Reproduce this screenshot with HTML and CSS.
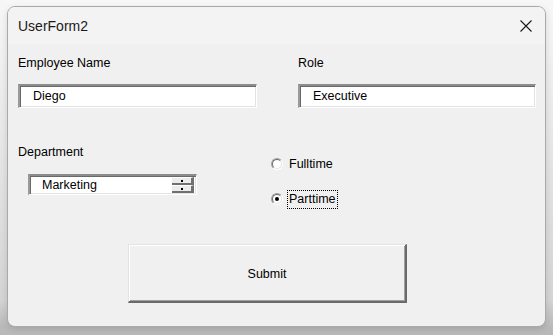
FILE: index.html
```html
<!DOCTYPE html>
<html>
<head>
<meta charset="utf-8">
<link rel="stylesheet" href="styles.css">
</head>
<body>
<div class="window">
  <div class="titlebar">
    <span class="title">UserForm2</span>
    <svg class="close" width="12" height="12" viewBox="0 0 12 12"><path d="M0.5 0.5 L11.5 11.5 M11.5 0.5 L0.5 11.5" stroke="#1a1a1a" stroke-width="1.1" fill="none"/></svg>
  </div>
  <div class="content">
    <div class="row-top">
      <div class="field">
        <div class="label">Employee Name</div>
        <div class="textbox name">Diego</div>
      </div>
      <div class="field">
        <div class="label">Role</div>
        <div class="textbox role">Executive</div>
      </div>
    </div>
    <div class="row-mid">
      <div class="field">
        <div class="label">Department</div>
        <div class="combo">
          <span class="combo-text">Marketing</span>
          <span class="spin">
            <span class="spin-btn"><i></i></span>
            <span class="spin-btn"><i></i></span>
          </span>
        </div>
      </div>
      <div class="radios">
        <div class="radio-row"><span class="radio"><span class="radio-in"></span></span><span class="radio-label">Fulltime</span></div>
        <div class="radio-row"><span class="radio"><span class="radio-in"><span class="dot"></span></span></span><span class="radio-label focus">Parttime</span></div>
      </div>
    </div>
    <div class="btn">Submit</div>
  </div>
</div>
</body>
</html>
```
FILE: styles.css
```css
html, body {
  margin: 0;
  padding: 0;
}
body {
  width: 553px;
  height: 335px;
  overflow: hidden;
  padding: 6px 0 0 7px;
  box-sizing: border-box;
  background: linear-gradient(to bottom, #f7f7f7 0px, #d4d4d4 300px, #b9b9b9 327px, #b9b9b9 335px);
  font-family: "Liberation Sans", Arial, sans-serif;
  font-size: 12.5px;
  color: #000;
}
.window {
  width: 539px;
  height: 321px;
  box-sizing: border-box;
  border: 1px solid #a9a9a9;
  border-radius: 8px;
  overflow: hidden;
  background: #f0f0f0;
  box-shadow: 0 2px 6px rgba(0,0,0,0.12);
}
.titlebar {
  height: 37px;
  background: #f3f3f3;
  display: flex;
  align-items: center;
  justify-content: space-between;
  padding: 0 13px 0 10px;
}
.title {
  font-size: 14px;
  color: #1a1a1a;
  line-height: 16px;
  padding-top: 1px;
}
.close {
  display: block;
  margin-top: 1px;
}
.content {
  padding: 11px 0 0 10px;
}
.label {
  line-height: 16px;
  height: 16px;
}
.row-top {
  display: grid;
  grid-template-columns: 280px 238px;
}
.textbox {
  margin-top: 13px;
  height: 24px;
  box-sizing: border-box;
  border-style: solid;
  border-width: 2px 1px 1px 2px;
  border-color: #8c8c8c #ffffff #ffffff #9a9a9a;
  box-shadow: inset 1px 1px 0 #696969, inset -1px -1px 0 #e3e3e3;
  background: #fff;
  padding-left: 13px;
  line-height: 21px;
}
.textbox.name { width: 239px; }
.textbox.role { width: 238px; }
.row-mid {
  display: grid;
  grid-template-columns: 253px 200px;
  margin-top: 36px;
}
.combo {
  margin: 14px 0 0 10px;
  width: 169px;
  height: 21px;
  box-sizing: border-box;
  border-style: solid;
  border-width: 2px 1px 1px 2px;
  border-color: #8c8c8c #ffffff #ffffff #9a9a9a;
  box-shadow: inset 1px 1px 0 #696969, inset -1px -1px 0 #e3e3e3;
  background: #fff;
  display: flex;
  align-items: stretch;
  padding: 1px 2px 1px 1px;
}
.combo-text {
  flex: 1;
  padding-left: 11px;
  line-height: 17px;
}
.spin {
  width: 22px;
  display: flex;
  flex-direction: column;
  background: #707070;
}
.spin-btn {
  flex: 1;
  background: #ececec;
  border-top: 1px solid #ffffff;
  border-bottom: 2px solid #707070;
  border-right: 3px solid #707070;
  display: flex;
  align-items: center;
  justify-content: center;
}
.spin-btn i {
  display: block;
  width: 2px;
  height: 2px;
  background: #000;
}
.radios {
  padding-top: 10px;
  display: flex;
  flex-direction: column;
  gap: 15px;
}
.radio-row {
  height: 20px;
  display: flex;
  align-items: center;
}
.radio {
  width: 12px;
  height: 12px;
  box-sizing: border-box;
  border-radius: 50%;
  border: 1px solid;
  border-color: #a0a0a0 #ffffff #ffffff #a0a0a0;
  margin-right: 4px;
}
.radio-in {
  display: flex;
  align-items: center;
  justify-content: center;
  width: 10px;
  height: 10px;
  box-sizing: border-box;
  border-radius: 50%;
  border: 1px solid;
  border-color: #696969 #e3e3e3 #e3e3e3 #696969;
  background: #fff;
}
.dot {
  display: block;
  width: 4px;
  height: 4px;
  border-radius: 50%;
  background: #000;
}
.radio-label {
  border: 1px dotted transparent;
  padding: 0 1px;
  line-height: 17px;
}
.radio-label.focus {
  border-color: #000;
}
.btn {
  margin: 35px 0 0 110px;
  width: 279px;
  height: 59px;
  box-sizing: border-box;
  border-style: solid;
  border-width: 1px 2px 2px 1px;
  border-color: #e3e3e3 #6a6a6a #6a6a6a #e3e3e3;
  box-shadow: inset 1px 1px 0 #ffffff, inset -1px -1px 0 #a0a0a0;
  background: #f0f0f0;
  display: flex;
  align-items: center;
  justify-content: center;
  padding-top: 1px;
}
```
